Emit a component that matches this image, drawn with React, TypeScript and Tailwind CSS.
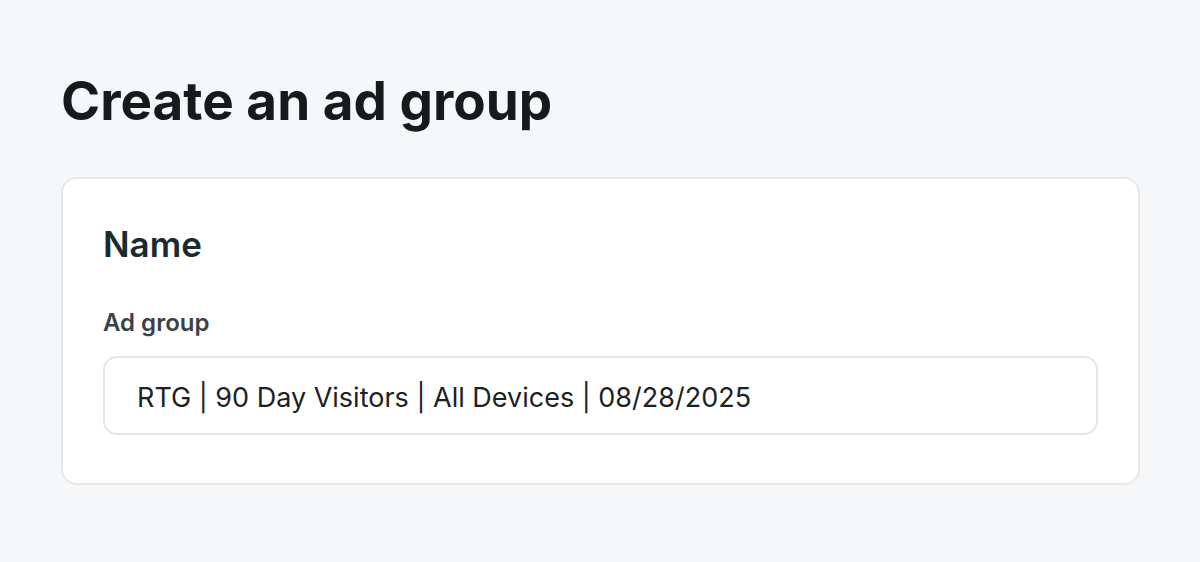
export default function App() {
  return (
    <div className="min-h-screen bg-[#f6f7f9] pl-[61px] pr-[60px] pt-[68px] font-['Inter','Liberation_Sans',sans-serif]">
      <h1 className="text-[53px] font-bold leading-[66px] text-[#17191c]">
        Create an ad group
      </h1>
      <div className="mt-[43px] rounded-[16px] border-2 border-[#e6e7e9] bg-white px-[40px] pt-[44px] pb-[48px]">
        <h2 className="text-[35px] font-semibold leading-[42px] text-[#1a2a31]">Name</h2>
        <label className="mt-[44px] block text-[24px] font-semibold leading-[28px] text-[#3a4248]">
          Ad group
        </label>
        <input
          className="mt-[19px] block h-[79px] w-full rounded-[14px] border-2 border-[#e4e5e7] bg-white px-[32px] pt-[3px] text-[27px] text-[#1c1f23] outline-none"
          defaultValue="RTG | 90 Day Visitors | All Devices | 08/28/2025"
        />
      </div>
    </div>
  );
}
